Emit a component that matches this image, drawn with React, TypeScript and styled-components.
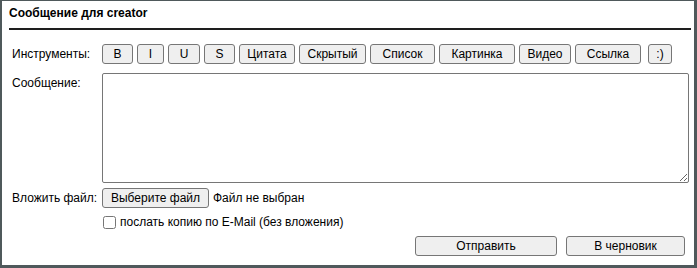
import React from "react";
import styled, { createGlobalStyle } from "styled-components";

const Global = createGlobalStyle`
  html, body { margin: 0; padding: 0; background: #fff; }
  body { font-family: "Liberation Sans", Arial, sans-serif; font-size: 12px; color: #000; }
  * { box-sizing: border-box; }
`;

const Frame = styled.div`
  width: 697px;
  height: 268px;
  border-style: solid;
  border-color: #4f595b;
  border-width: 1px 3px 3px 2px;
  background: #fff;
  display: flex;
  flex-direction: column;
`;

const Header = styled.div`
  margin: 0 3px 0 7px;
  padding: 5px 0 0 0;
  height: 29px;
  border-bottom: 2px solid #1e1e1e;
  font-weight: bold;
  font-size: 12px;
  line-height: 15px;
`;

const Form = styled.div`
  display: grid;
  grid-template-columns: 90px 1fr;
  padding: 14px 5px 0 10px;
`;

const Label = styled.div<{ $top?: number }>`
  font-size: 12px;
  line-height: 15px;
  padding-top: ${(p) => p.$top ?? 0}px;
  white-space: nowrap;
`;

const Toolbar = styled.div`
  display: flex;
  gap: 4px;
  align-items: center;
`;

const ToolButton = styled.button<{ $w: number; $extra?: number }>`
  width: ${(p) => p.$w}px;
  height: 20px;
  margin-left: ${(p) => p.$extra ?? 0}px;
  padding: 0;
  border: 1px solid #767676;
  border-radius: 3px;
  background: #efefef;
  color: #000;
  font-family: "Liberation Sans", Arial, sans-serif;
  font-size: 12px;
  line-height: 18px;
`;

const TextArea = styled.textarea`
  display: block;
  width: 587px;
  height: 110px;
  margin: 9px 0 0 0;
  border: 1px solid #767676;
  border-radius: 2px;
  font-family: "Liberation Mono", monospace;
  font-size: 12px;
  resize: both;
`;

const MsgLabel = styled(Label)`
  margin-top: 9px;
`;

const FileRow = styled.div`
  display: flex;
  align-items: center;
  gap: 4px;
  margin-top: 5px;
  height: 20px;
`;

const FileLabel = styled(Label)`
  margin-top: 5px;
  height: 20px;
  display: flex;
  align-items: center;
`;

const FileButton = styled.button`
  width: 107px;
  height: 20px;
  padding: 0;
  border: 1px solid #767676;
  border-radius: 3px;
  background: #efefef;
  color: #000;
  font-family: "Liberation Sans", Arial, sans-serif;
  font-size: 12px;
`;

const CheckRow = styled.label`
  grid-column: 2;
  display: flex;
  align-items: center;
  margin-top: 7px;
  height: 15px;
  font-size: 12px;
  line-height: 15px;
`;

const Check = styled.input`
  width: 13px;
  height: 13px;
  margin: 0 4px 0 1px;
`;

const Actions = styled.div`
  display: flex;
  justify-content: flex-end;
  gap: 9px;
  padding: 6px 9px 0 0;
`;

const ActionButton = styled.button<{ $w: number }>`
  width: ${(p) => p.$w}px;
  height: 20px;
  padding: 0;
  border: 1px solid #767676;
  border-radius: 3px;
  background: #efefef;
  color: #000;
  font-family: "Liberation Sans", Arial, sans-serif;
  font-size: 12px;
`;

const tools: { t: string; w: number; extra?: number }[] = [
  { t: "B", w: 31 },
  { t: "I", w: 27 },
  { t: "U", w: 32 },
  { t: "S", w: 31 },
  { t: "Цитата", w: 56 },
  { t: "Скрытый", w: 67 },
  { t: "Список", w: 65 },
  { t: "Картинка", w: 76 },
  { t: "Видео", w: 52 },
  { t: "Ссылка", w: 66 },
  { t: ":)", w: 24, extra: 3 },
];

export default function App() {
  return (
    <>
      <Global />
      <Frame>
        <Header>Сообщение для creator</Header>
        <Form>
          <Label $top={3}>Инструменты:</Label>
          <Toolbar>
            {tools.map((b) => (
              <ToolButton key={b.t} $w={b.w} $extra={b.extra}>
                {b.t}
              </ToolButton>
            ))}
          </Toolbar>
          <MsgLabel $top={3}>Сообщение:</MsgLabel>
          <TextArea />
          <FileLabel>Вложить файл:</FileLabel>
          <FileRow>
            <FileButton>Выберите файл</FileButton>
            <span>Файл не выбран</span>
          </FileRow>
          <CheckRow>
            <Check type="checkbox" />
            послать копию по E-Mail (без вложения)
          </CheckRow>
        </Form>
        <Actions>
          <ActionButton $w={142}>Отправить</ActionButton>
          <ActionButton $w={119}>В черновик</ActionButton>
        </Actions>
      </Frame>
    </>
  );
}
